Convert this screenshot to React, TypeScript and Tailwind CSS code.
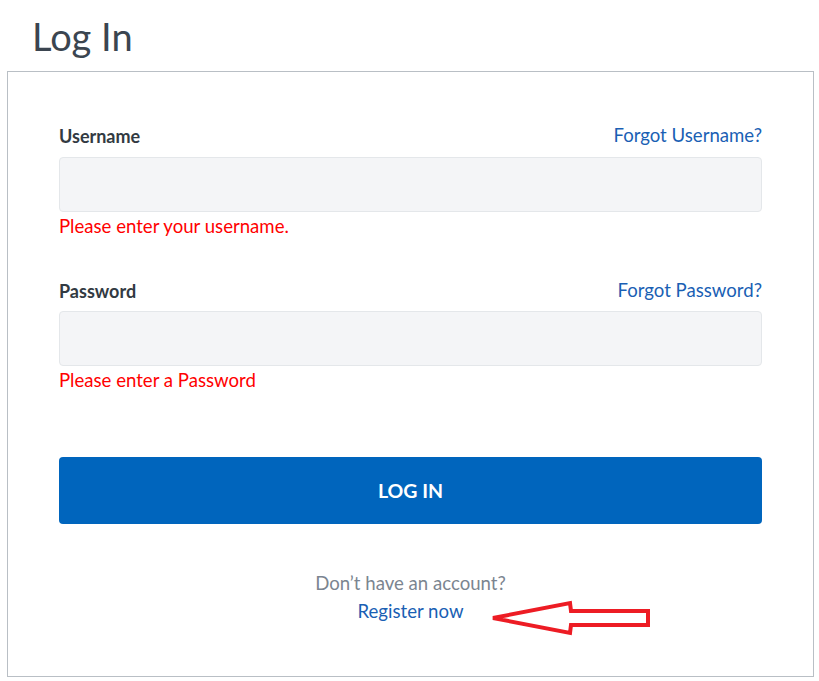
export default function App() {
  return (
    <div className="min-h-screen bg-white pl-[7px] pt-[14px] font-['Lato','Open_Sans',sans-serif]">
      <h1 className="ml-[25px] text-[38px] leading-[44px] text-[#3b4550]">Log In</h1>

      {/* Card */}
      <div className="relative mt-[13px] w-[807px] border border-[#b9bfc5] px-[51px] pt-[52px] pb-[51px]">
        {/* Username */}
        <div className="flex items-center justify-between h-[24px]">
          <label className="text-[18px] font-bold text-[#323a42]">Username</label>
          <a className="text-[18.6px] text-[#1a5fb4]">Forgot Username?</a>
        </div>
        <input
          type="text"
          className="mt-[9px] block h-[55px] w-full rounded-[4px] border border-[#e4e7ea] bg-[#f4f5f7]"
        />
        <p className="mt-[2px] h-[24px] leading-[24px] text-[18.6px] text-[#ff0000]">Please enter your username.</p>

        {/* Password */}
        <div className="mt-[41px] flex items-center justify-between h-[24px]">
          <label className="text-[18px] font-bold text-[#323a42]">Password</label>
          <a className="text-[18.6px] text-[#1a5fb4]">Forgot Password?</a>
        </div>
        <input
          type="password"
          className="mt-[8px] block h-[55px] w-full rounded-[4px] border border-[#e4e7ea] bg-[#f4f5f7]"
        />
        <p className="mt-[2px] h-[24px] leading-[24px] text-[18.6px] text-[#ff0000]">Please enter a Password</p>

        <button className="mt-[65px] flex h-[67px] w-full items-center justify-center rounded-[4px] bg-[#0065bd] text-[19.5px] font-bold text-white">
          LOG IN
        </button>

        <div className="mt-[45px] flex flex-col items-center text-[18.6px] leading-[28px]">
          <span className="text-[#7b8590]">Don’t have an account?</span>
          <a className="text-[#1a5fb4]">Register now</a>
        </div>

        {/* annotation arrow */}
        <svg
          className="absolute left-[472px] top-[525px]"
          width="180"
          height="50"
          viewBox="480 525 180 50"
        >
          <polygon
            points="493,546 570,531 571,539 648,539 648,553 571,553 570,561"
            fill="none"
            stroke="#ed1c24"
            strokeWidth="4"
            strokeLinejoin="miter"
          />
        </svg>
      </div>
    </div>
  )
}
